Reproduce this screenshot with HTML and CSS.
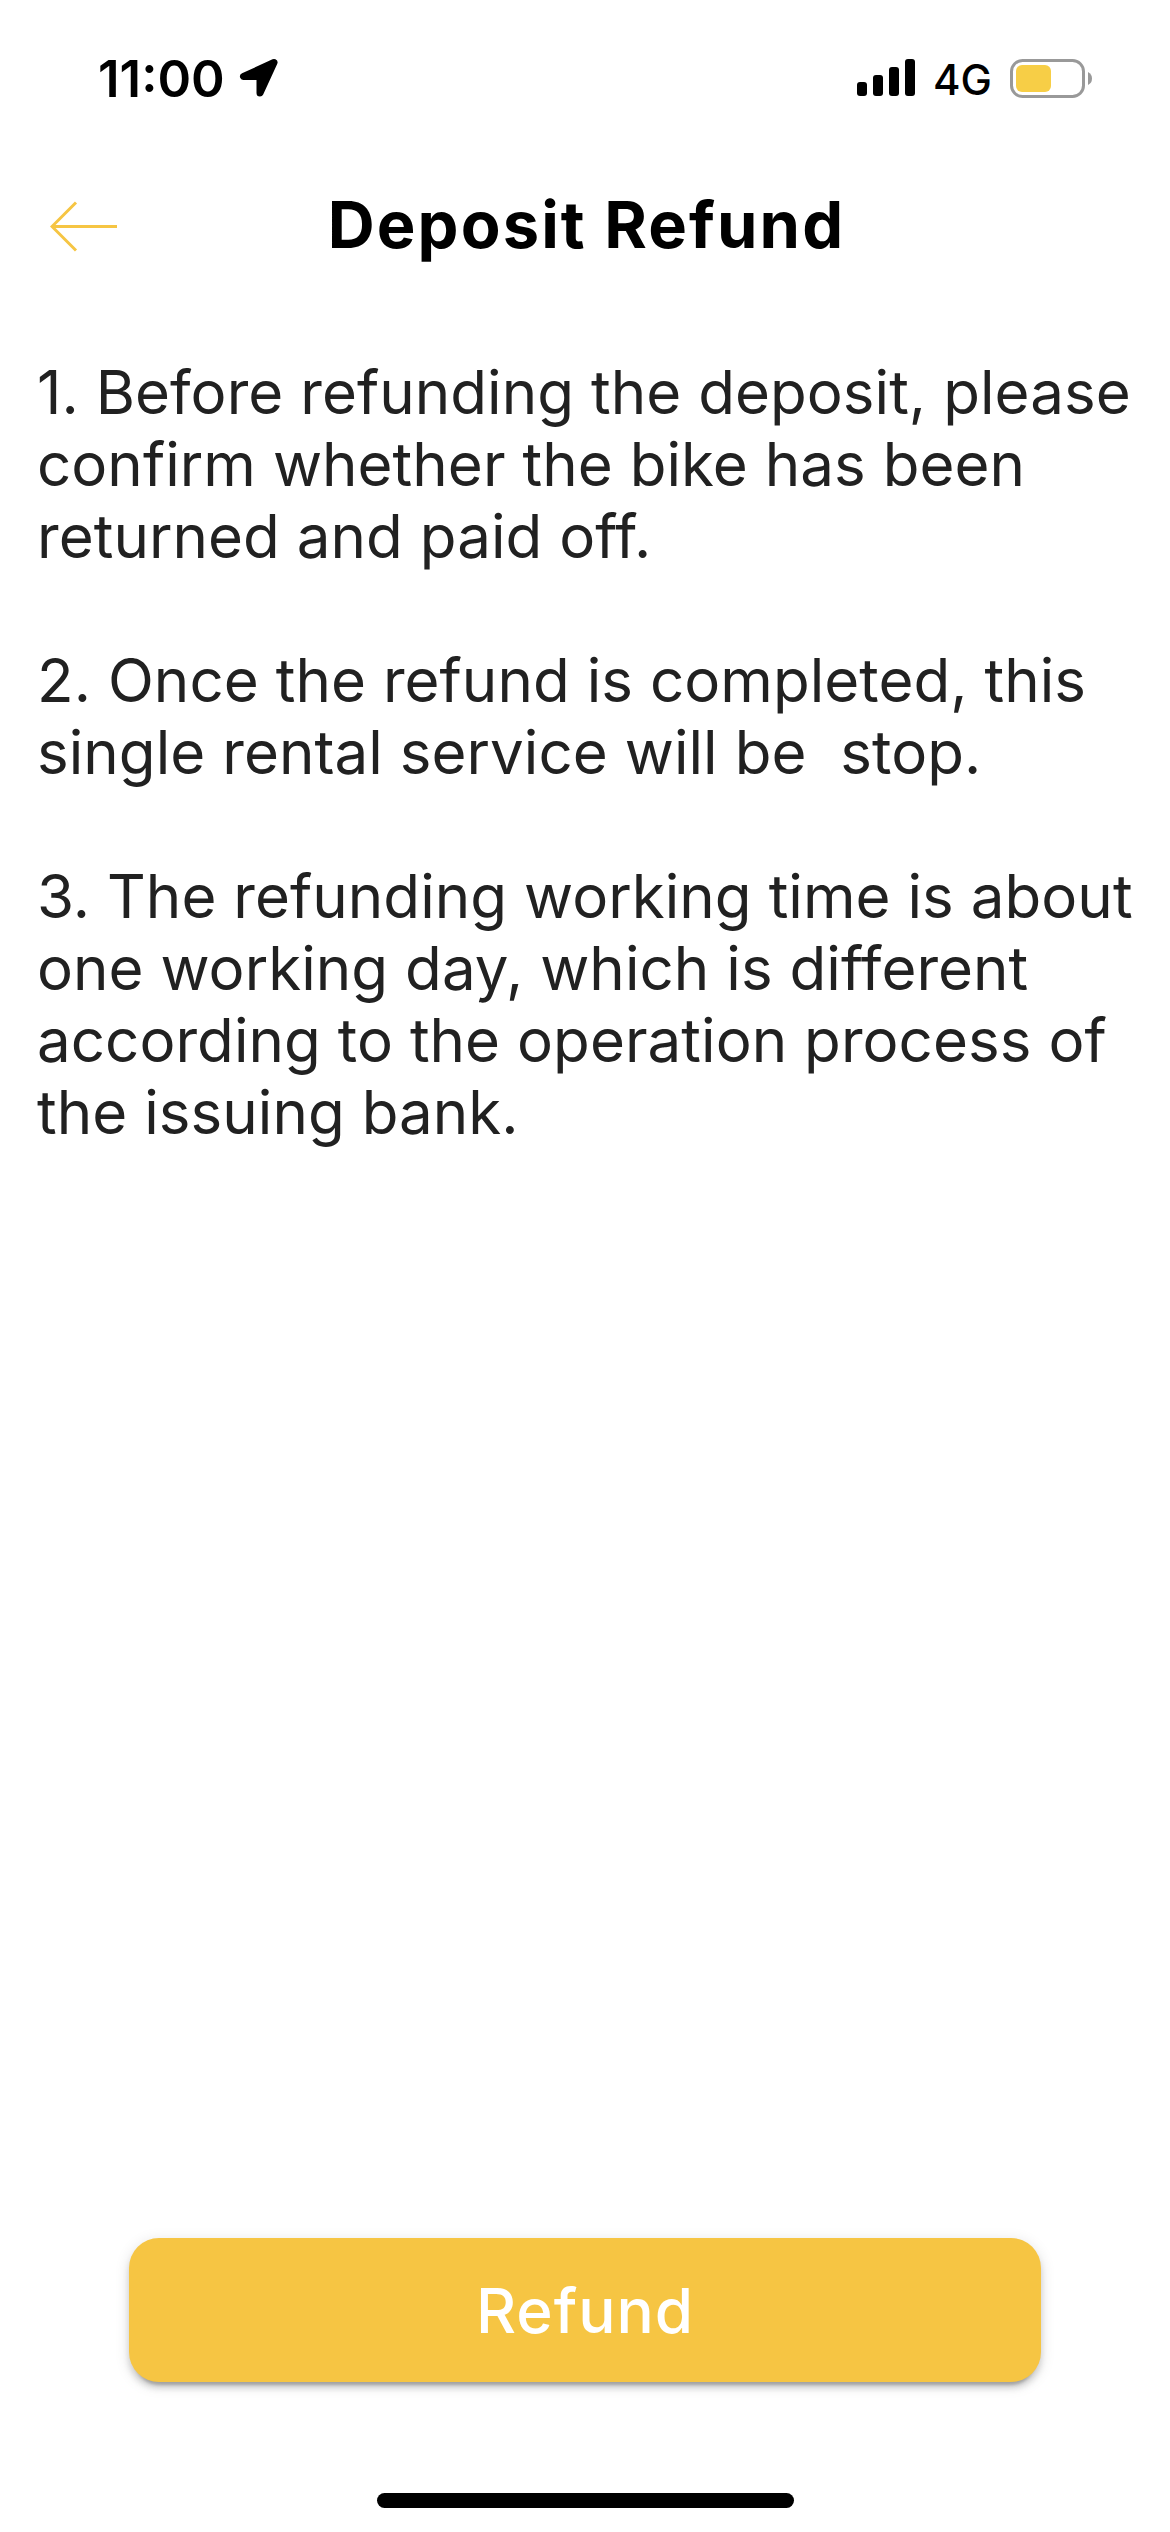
FILE: index.html
```html
<!DOCTYPE html>
<html lang="en">
<head>
  <meta charset="UTF-8" />
  <meta name="viewport" content="width=device-width, initial-scale=1.0"/>
  <title>Deposit Refund</title>
  <link rel="stylesheet" href="styles.css">
</head>
<body>
  <div class="status-bar">
    <span class="time">11:00</span>
    <svg class="location" width="40" height="40" viewBox="0 0 40 40">
      <path d="M35 4.500L4.500 18.500H21V35Z"/>
    </svg>
    <svg class="signal" width="58" height="38" viewBox="0 0 58 38">
      <rect x="0" y="23" width="10" height="14" rx="3"/>
      <rect x="16" y="16" width="10" height="21" rx="3"/>
      <rect x="32" y="8" width="10" height="29" rx="3"/>
      <rect x="48" y="0" width="10" height="37" rx="3"/>
    </svg>
    <span class="network">4G</span>
    <svg class="battery" width="83" height="39" viewBox="0 0 83 39">
      <rect class="shell" x="1.500" y="1.500" width="72" height="36" rx="11"/>
      <rect class="level" x="6" y="6" width="35" height="27" rx="6"/>
      <path class="tip" d="M78 13Q82 15 82 19.500T78 26Z"/>
    </svg>
  </div>

  <header>
    <svg class="back" width="68" height="52" viewBox="0 0 68 52">
      <path d="M67 26.500H2M26 2.500L2 26.500L26 50.500"/>
    </svg>
    <h1>Deposit Refund</h1>
  </header>

  <main>
    <p>1. Before refunding the deposit, please<br>confirm whether the bike has been<br>returned and paid off.</p>
    <p>2. Once the refund is completed, this<br>single rental service will be&nbsp; stop.</p>
    <p>3. The refunding working time is about<br>one working day, which is different<br>according to the operation process of<br>the issuing bank.</p>
  </main>

  <footer>
    <button>Refund</button>
    <div class="home-indicator"></div>
  </footer>
</body>
</html>
```
FILE: styles.css
```css
* {
  margin: 0;
  padding: 0;
  box-sizing: border-box;
}
body {
  font-family: Inter, sans-serif;
  background: white;
  color: black;
  min-height: 100vh;
  display: flex;
  flex-direction: column;
}
.status-bar {
  height: 156px;
  padding: 0 77px 0 98px;
  display: flex;
  align-items: center;
}
.time {
  font-size: 51px;
  font-weight: 600;
}
.location {
  margin-left: 14px;
  stroke: black;
  stroke-width: 7;
  stroke-linejoin: round;
}
.signal {
  margin-left: auto;
}
.network {
  font-size: 42px;
  font-weight: 500;
  margin: 2px 18px 0;
}
.battery .shell {
  fill: none;
  stroke: #999;
  stroke-width: 3;
}
.battery .level {
  fill: #f7ce46;
}
.battery .tip {
  fill: #999;
}
header {
  height: 140px;
  padding-left: 50px;
  display: flex;
  align-items: center;
}
.back {
  fill: none;
  stroke: #f6c543;
  stroke-width: 3;
}
h1 {
  flex: 1;
  padding: 0 115px 4px 0;
  text-align: center;
  font-size: 65px;
  font-weight: 700;
  letter-spacing: 2.1px;
}
main {
  padding: 60px 0 0 37px;
  font-size: 60px;
  line-height: 72px;
  letter-spacing: 0.06px;
  color: #212121;
  white-space: nowrap;
}
p {
  margin-bottom: 72px;
}
footer {
  margin-top: auto;
  display: flex;
  flex-direction: column;
  align-items: center;
}
button {
  width: 912px;
  height: 144px;
  border: none;
  border-radius: 30px;
  background: #f6c543;
  box-shadow: 0 9px 3px -6px rgba(0,0,0,0.2), 0 6px 6px rgba(0,0,0,0.14), 0 3px 15px rgba(0,0,0,0.12);
  color: white;
  font-family: Inter, sans-serif;
  font-size: 62px;
  font-weight: 500;
  letter-spacing: 1px;
}
.home-indicator {
  width: 417px;
  height: 15px;
  margin: 111px 0 24px 1px;
  border-radius: 8px;
  background: black;
}
```
